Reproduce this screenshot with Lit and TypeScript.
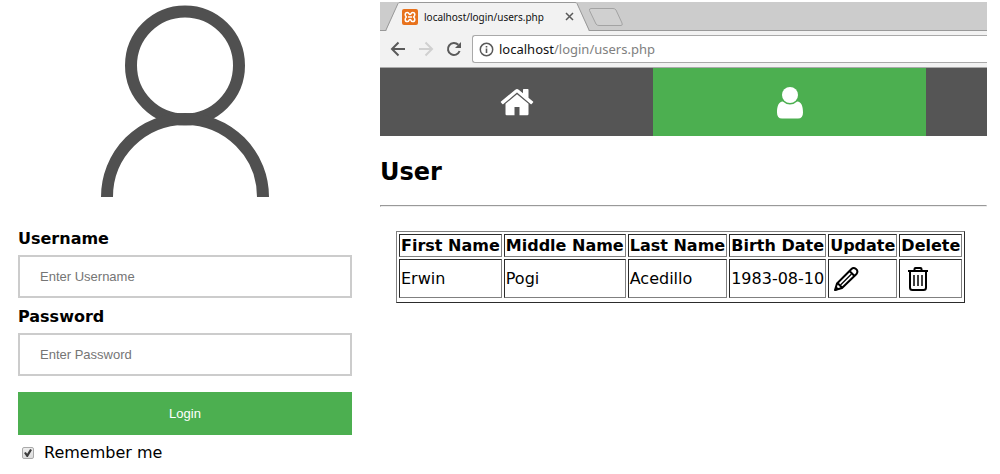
import { LitElement, html, css } from "lit";
import { customElement, state } from "lit/decorators.js";

interface User {
  first: string;
  middle: string;
  last: string;
  birth: string;
}

@customElement("login-form")
class LoginForm extends LitElement {
  static styles = css`
    :host {
      display: block;
      min-width: 0;
    }
    .avatar {
      display: block;
      width: 168px;
      height: 192px;
      margin: 0 auto;
      padding-top: 5px;
    }
    .form {
      display: flex;
      flex-direction: column;
      padding-top: 32px;
    }
    .label {
      font-weight: bold;
      line-height: 20px;
    }
    .field {
      box-sizing: border-box;
      width: 100%;
      height: 43px;
      margin: 6px 0 9px;
      padding: 12px 20px;
      border: 2px solid #ccc;
      border-radius: 0;
      background: #fff;
      font: 13px "Liberation Sans", Arial, sans-serif;
      outline: none;
    }
    .field::placeholder {
      color: #757575;
      opacity: 1;
    }
    .submit {
      height: 43px;
      margin: 7px 0 8px;
      padding: 0 20px;
      border: 0;
      background: #4caf50;
      color: #fff;
      font: 13px "Liberation Sans", Arial, sans-serif;
      cursor: pointer;
    }
    .remember {
      display: flex;
      align-items: center;
      gap: 10px;
      padding-left: 4px;
      line-height: 20px;
    }
    .check {
      appearance: none;
      display: grid;
      box-sizing: border-box;
      width: 12px;
      height: 12px;
      margin: 0;
      border: 1px solid #a9a9a9;
      border-radius: 2px;
      background: linear-gradient(#eee, #dcdcdc);
    }
    .check:checked::before {
      content: "";
      margin: 1px;
      background: #3c3c3c;
      clip-path: polygon(0 50%, 22% 38%, 40% 58%, 76% 0, 100% 14%, 48% 100%, 34% 100%);
    }
  `;

  render() {
    return html`
      <svg class="avatar" viewBox="0 0 168 192" fill="none" stroke="#505050" stroke-width="12" role="img" aria-label="User">
        <circle cx="84" cy="60.500" r="54" />
        <path d="M6 192A78 78 0 0 1 162 192" />
      </svg>
      <form class="form" @submit=${(e: Event) => e.preventDefault()}>
        <label class="label" for="username">Username</label>
        <input class="field" id="username" type="text" placeholder="Enter Username" />
        <label class="label" for="password">Password</label>
        <input class="field" id="password" type="password" placeholder="Enter Password" />
        <button class="submit" type="submit">Login</button>
        <label class="remember"><input class="check" type="checkbox" checked />Remember me</label>
      </form>
    `;
  }
}

@customElement("browser-chrome")
class BrowserChrome extends LitElement {
  static styles = css`
    :host {
      display: block;
      font-family: "Noto Sans", "Open Sans", sans-serif;
    }
    .tabs {
      display: flex;
      height: 29px;
      background: linear-gradient(#999, #999) bottom / 100% 1px no-repeat #ccc;
    }
    .tab {
      display: grid;
      width: 216px;
      height: 29px;
    }
    .shape,
    .content {
      grid-area: 1 / 1;
    }
    .content {
      display: flex;
      align-items: center;
      padding: 0 22px;
      gap: 6px;
      font-size: 10px;
      color: #111;
    }
    .title {
      flex: 1;
      white-space: nowrap;
    }
    .close,
    .tool,
    .new {
      display: flex;
      padding: 0;
      border: 0;
      background: none;
    }
    .new {
      align-self: center;
      margin-left: -8px;
    }
    .bar {
      display: flex;
      align-items: center;
      gap: 12px;
      height: 36px;
      padding-left: 10px;
      background: #f2f2f2;
      border-bottom: 1px solid #aaa;
    }
    .address {
      flex: 1;
      display: flex;
      align-items: center;
      box-sizing: border-box;
      gap: 5px;
      height: 28px;
      margin-left: -2px;
      padding-left: 6px;
      border: 1px solid #a9a9a9;
      border-right: 0;
      border-radius: 3px 0 0 3px;
      background: #fff;
      font-size: 13px;
      color: #111;
    }
    .path {
      color: #808080;
    }
  `;

  render() {
    return html`
      <div class="tabs">
        <div class="tab">
          <svg class="shape" width="216" height="29" viewBox="0 0 216 29">
            <path d="M6 29 18 1.500Q18.500 .5 20 .5H195Q196.500 .5 197 1.500L209 29Z" fill="#f2f2f2" />
            <path d="M5.500 29 18 1.500Q18.500 .5 20 .5H195Q196.500 .5 197 1.500L209.500 29" fill="none" stroke="#999" />
          </svg>
          <div class="content">
            <svg width="16" height="16" viewBox="0 0 16 16">
              <rect width="16" height="16" rx="2" fill="#e8721c" />
              <path d="M5.300 3.400Q3.200 3.400 3.200 5.600Q3.200 7 4.500 8Q3.200 9 3.200 10.400Q3.200 12.600 5.300 12.600Q6.600 12.600 7 11.200Q8 9.800 9 11.200Q9.400 12.600 10.700 12.600Q12.800 12.600 12.800 10.400Q12.800 9 11.500 8Q12.800 7 12.800 5.600Q12.800 3.400 10.700 3.400Q9.400 3.400 9 4.800Q8 6.200 7 4.800Q6.600 3.400 5.300 3.400ZM6 8H10" fill="none" stroke="#fff" stroke-width="1.500" stroke-linejoin="round" />
            </svg>
            <span class="title">localhost/login/users.php</span>
            <button class="close" aria-label="Close tab">
              <svg width="9" height="9" viewBox="0 0 9 9"><path d="M1 1 8 8M8 1 1 8" stroke="#5a5a5a" stroke-width="1.500" /></svg>
            </button>
          </div>
        </div>
        <button class="new" aria-label="New tab">
          <svg width="36" height="18" viewBox="0 0 36 18">
            <path d="M3 .5H25Q27 .5 28 2L34 15Q35 17.500 33 17.500H11Q9 17.500 8 16L1.500 2.500Q1 .5 3 .5Z" fill="#d0d0d0" stroke="#a3a3a3" />
          </svg>
        </button>
      </div>
      <div class="bar">
        <button class="tool" aria-label="Back">
          <svg width="16" height="16" viewBox="0 0 16 16"><path d="M15 8H2M8.500 1.500 2 8 8.500 14.500" fill="none" stroke="#5a5a5a" stroke-width="2" /></svg>
        </button>
        <button class="tool" aria-label="Forward">
          <svg width="16" height="16" viewBox="0 0 16 16"><path d="M1 8H14M7.500 1.500 14 8 7.500 14.500" fill="none" stroke="#d0d0d0" stroke-width="2" /></svg>
        </button>
        <button class="tool" aria-label="Reload">
          <svg width="16" height="16" viewBox="0 0 16 16">
            <path d="M13.600 10A6 6 0 1 1 12.300 3.800" fill="none" stroke="#5a5a5a" stroke-width="2" />
            <path d="M15 1V7H9Z" fill="#5a5a5a" />
          </svg>
        </button>
        <div class="address">
          <svg width="15" height="15" viewBox="0 0 15 15">
            <circle cx="7.500" cy="7.500" r="6.200" fill="none" stroke="#5a5a5a" stroke-width="1.500" />
            <path d="M7.500 6.500V11M7.500 4V5.500" stroke="#5a5a5a" stroke-width="1.600" />
          </svg>
          <span>localhost<span class="path">/login/users.php</span></span>
        </div>
      </div>
    `;
  }
}

@customElement("users-page")
class UsersPage extends LitElement {
  static styles = css`
    :host {
      display: block;
    }
    .nav {
      display: flex;
      overflow: hidden;
      background: #555;
    }
    .item {
      flex: 0 0 45%;
      display: flex;
      align-items: center;
      justify-content: center;
      height: 68px;
      color: #fff;
    }
    .active {
      background: #4caf50;
    }
    .title {
      margin: 20px 0 16px;
      font-size: 24px;
      line-height: 33px;
    }
    .rule {
      margin: 0;
      border: 1px solid;
      border-color: #999 #eee #eee #999;
    }
    .table {
      margin: 24px 0 0 16px;
      padding-bottom: 2px;
      border: 1px solid;
      border-color: #808080 #2c2c2c #2c2c2c #808080;
      border-spacing: 2px;
      white-space: nowrap;
      line-height: 19px;
    }
    .cell {
      padding: 1px;
      border: 1px solid;
      border-color: #2c2c2c #808080 #808080 #2c2c2c;
      text-align: left;
    }
    .head {
      text-align: center;
    }
    .action {
      display: flex;
      align-items: center;
      height: 35px;
      padding: 0 4px;
      border: 0;
      background: none;
      color: #000;
    }
    .edit {
      padding: 0 3px;
    }
  `;

  @state() users: User[] = [
    { first: "Erwin", middle: "Pogi", last: "Acedillo", birth: "1983-08-10" },
  ];

  render() {
    const heads = ["First Name", "Middle Name", "Last Name", "Birth Date", "Update", "Delete"];
    return html`
      <nav class="nav">
        <a class="item" href="#home" aria-label="Home">
          <svg width="34" height="28" viewBox="0 0 34 28" fill="currentColor">
            <path d="M17 6.200 28.500 15.700V26Q28.500 27.200 27.300 27.200H19.500V19H14.500V27.200H6.700Q5.500 27.200 5.500 26V15.700Z" />
            <path d="M15.300 1.700Q17 .4 18.700 1.700L23 5.300V1.700Q23 1 23.700 1H27.800Q28.500 1 28.500 1.700V9.800L33 13.500Q33.500 14 33 14.600L31.700 16Q31.200 16.500 30.600 16L17 4.600 3.400 16Q2.800 16.500 2.300 16L1 14.600Q.5 14 1 13.500Z" />
          </svg>
        </a>
        <a class="item active" href="#users" aria-label="Users">
          <svg width="28" height="36" viewBox="0 0 28 36" fill="currentColor">
            <circle cx="14" cy="11" r="8" />
            <path d="M6.800 17.500Q10 20.500 14 20.500T21.200 17.500C25.500 17.500 27 22.500 27 28.500Q27 34.500 22 34.500H6Q1 34.500 1 28.500C1 22.500 2.500 17.500 6.800 17.500Z" />
          </svg>
        </a>
      </nav>
      <h2 class="title">User</h2>
      <hr class="rule" />
      <table class="table">
        <thead>
          <tr>${heads.map((h) => html`<th class="cell head" scope="col">${h}</th>`)}</tr>
        </thead>
        <tbody>
          ${this.users.map(
            (u) => html`<tr>
              <td class="cell">${u.first}</td>
              <td class="cell">${u.middle}</td>
              <td class="cell">${u.last}</td>
              <td class="cell">${u.birth}</td>
              <td class="cell">
                <button class="action edit" aria-label="Update">
                  <svg width="26" height="26" viewBox="0 0 26 26" fill="none" stroke="currentColor" stroke-width="2" stroke-linejoin="round">
                    <path d="M2 24 4 17.500 18.500 3Q20.500 1 23 3T23.500 8L9 22Z M4.500 17 9.500 22M16.500 5 21.500 10" />
                    <path d="M7.500 19 18.500 8" stroke-width="1.200" />
                    <path d="M1.500 25 3 20 6.500 23.500Z" fill="currentColor" stroke="none" />
                  </svg>
                </button>
              </td>
              <td class="cell">
                <button class="action" aria-label="Delete">
                  <svg width="26" height="26" viewBox="0 0 26 26" fill="none" stroke="currentColor" stroke-width="2">
                    <path d="M3 5H23M5 5V21.500Q5 24 7.500 24H18.500Q21 24 21 21.500V5M9.500 5V3Q9.500 2 10.500 2H15.500Q16.500 2 16.500 3V5" />
                    <path d="M9 9V20M13 9V20M17 9V20" stroke-width="1.500" />
                  </svg>
                </button>
              </td>
            </tr>`,
          )}
        </tbody>
      </table>
    `;
  }
}

@customElement("app-root")
class AppRoot extends LitElement {
  static styles = css`
    :host {
      display: grid;
      grid-template-columns: minmax(0, 334fr) minmax(0, 607fr);
      gap: 28px;
      padding: 0 13px 0 18px;
      background: #fff;
      color: #000;
      font: 16px "DejaVu Sans", Verdana, sans-serif;
    }
    .window {
      padding-top: 2px;
    }
  `;

  render() {
    return html`
      <login-form></login-form>
      <section class="window">
        <browser-chrome></browser-chrome>
        <users-page></users-page>
      </section>
    `;
  }
}
